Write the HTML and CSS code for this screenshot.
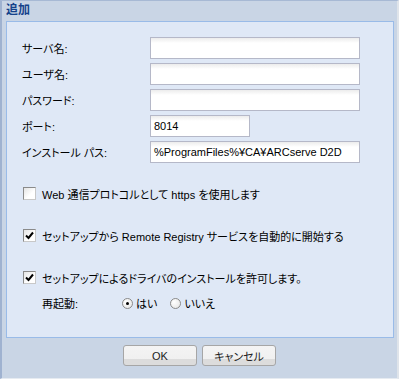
FILE: index.html
```html
<!doctype html>
<html lang="ja">
    <head>
        <meta charset="UTF-8" />
        <title>追加</title>
        <link rel="stylesheet" href="styles.css">
    </head>
    <body>
        <div class="window">
            <div class="title">追加</div>

            <div class="panel">
                <div class="form">
                    <div class="row">
                        <span class="label">サーバ名:</span>
                        <span class="field"></span>
                    </div>
                    <div class="row">
                        <span class="label">ユーザ名:</span>
                        <span class="field"></span>
                    </div>
                    <div class="row">
                        <span class="label">パスワード:</span>
                        <span class="field"></span>
                    </div>
                    <div class="row">
                        <span class="label">ポート:</span>
                        <span class="field short">8014</span>
                    </div>
                    <div class="row">
                        <span class="label">インストール パス:</span>
                        <span class="field">%ProgramFiles%¥CA¥ARCserve D2D</span>
                    </div>
                </div>

                <div class="check first">
                    <span class="box"></span>
                    Web 通信プロトコルとして https を使用します
                </div>
                <div class="check">
                    <span class="box">
                        <svg width="9" height="9" viewBox="0 0 9 9"><path d="M1 4.5 L3.5 7 L8 1.5" fill="none" stroke="#000" stroke-width="2"/></svg>
                    </span>
                    セットアップから Remote Registry サービスを自動的に開始する
                </div>
                <div class="check last">
                    <span class="box">
                        <svg width="9" height="9" viewBox="0 0 9 9"><path d="M1 4.5 L3.5 7 L8 1.5" fill="none" stroke="#000" stroke-width="2"/></svg>
                    </span>
                    セットアップによるドライバのインストールを許可します。
                </div>

                <div class="restart">
                    <span class="restart-label">再起動:</span>
                    <span class="radio on"></span>
                    <span class="option">はい</span>
                    <span class="radio"></span>
                    <span class="option">いいえ</span>
                </div>
            </div>

            <div class="footer">
                <button type="button">OK</button>
                <button type="button">キャンセル</button>
            </div>
        </div>
    </body>
</html>
```

FILE: styles.css
```css
body {
    margin: 0;
    font-family: "Liberation Sans", "Noto Sans CJK JP", sans-serif;
    font-size: 11px;
    font-feature-settings: "palt";
    color: #000;
}
.window {
    box-sizing: border-box;
    width: 399px;
    height: 379px;
    background: #c9d5e5;
    border-top: 1px solid #a7b9d4;
    border-left: 2px solid #9fb2d0;
    border-right: 2px solid #dfe4ea;
    border-bottom: 1px solid #e6ebf1;
    display: flex;
    flex-direction: column;
}
.title {
    height: 20px;
    line-height: 18px;
    padding-left: 4px;
    font-size: 12px;
    font-weight: bold;
    color: #15428b;
}
.panel {
    box-sizing: border-box;
    height: 317px;
    margin: 0 3px 0 4px;
    background: #dfe8f6;
    border: 1px solid #99bbe8;
    padding: 15px 0 0 15px;
}
.form {
    display: flex;
    flex-direction: column;
    gap: 4px;
}
.row {
    display: flex;
    align-items: center;
    height: 22px;
}
.label {
    width: 128px;
}
.field {
    box-sizing: border-box;
    width: 210px;
    height: 22px;
    line-height: 20px;
    padding-left: 3px;
    border: 1px solid #b5b8c8;
    background: linear-gradient(#ececec, #ffffff 5px);
}
.field.short {
    width: 100px;
}
.check {
    display: flex;
    align-items: center;
    height: 13px;
    margin-top: 29px;
    padding-left: 1px;
    gap: 6px;
}
.check.first {
    margin-top: 24px;
}
.box {
    box-sizing: border-box;
    width: 13px;
    height: 13px;
    border: 1px solid #8a8a8a;
    border-right-color: #c8c8c8;
    border-bottom-color: #c8c8c8;
    background: linear-gradient(135deg, #e4e4e4, #ffffff 60%);
    display: flex;
    align-items: center;
    justify-content: center;
}
.restart {
    display: flex;
    align-items: center;
    height: 14px;
    margin-top: 12px;
    padding-left: 20px;
}
.restart-label {
    width: 80px;
}
.radio {
    box-sizing: border-box;
    width: 11px;
    height: 11px;
    border-radius: 50%;
    border: 1px solid #8a8a8a;
    background: radial-gradient(circle at 35% 35%, #ffffff, #e2e2e2);
    position: relative;
}
.radio.on::after {
    content: "";
    position: absolute;
    left: 3px;
    top: 3px;
    width: 3px;
    height: 3px;
    border-radius: 50%;
    background: #000;
}
.option {
    margin: 0 13px 0 3px;
}
.footer {
    flex: 1;
    display: flex;
    justify-content: center;
    gap: 5px;
    padding-top: 7px;
}
button {
    box-sizing: border-box;
    width: 74px;
    height: 21px;
    padding: 0;
    border: 1px solid #a6a6a6;
    border-radius: 3px;
    background: linear-gradient(#f4f4f4, #f0f0f0 70%, #dcdcdc 70%, #dcdcdc);
    font-family: inherit;
    font-size: 11px;
    font-feature-settings: "palt";
    color: #222;
}
```
